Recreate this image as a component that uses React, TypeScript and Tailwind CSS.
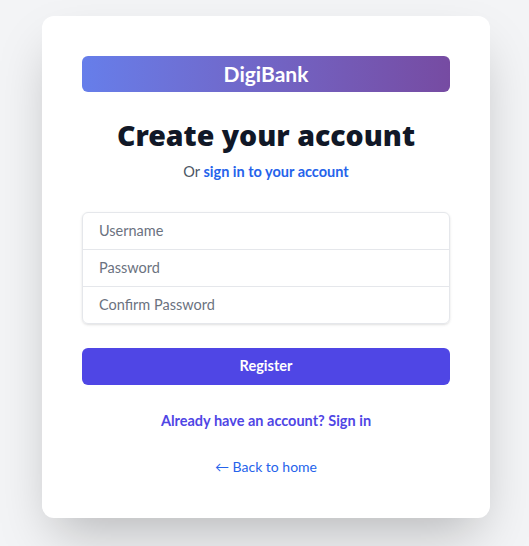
import React from 'react';

const App: React.FC = () => {
  return (
    <div className="min-h-screen bg-[#f3f4f6] flex justify-center pt-4 pl-[3px] font-['Lato',sans-serif]">
      <div className="w-[448px] h-[502px] bg-white rounded-xl shadow-2xl px-10 pt-10">
        <div className="h-9 rounded-md bg-gradient-to-r from-[#667eea] to-[#764ba2] flex items-center justify-center">
          <span className="text-white text-[21px] font-bold">DigiBank</span>
        </div>

        <h2 className="mt-[25px] text-center text-[28.5px] leading-9 font-black text-[#111827] font-['Noto_Sans',sans-serif]">Create your account</h2>
        <p className="mt-2 text-center text-[14.5px] text-[#4b5563]">
          Or <a href="#" className="font-bold text-[#2563eb]">sign in to your account</a>
        </p>

        <form className="mt-[29px]" onSubmit={e => e.preventDefault()}>
          <div className="rounded-md shadow-sm border border-[#e5e7eb] flex flex-col">
            <input type="text" placeholder="Username" className="h-9 px-4 text-[14.5px] outline-none placeholder-[#6b7280] rounded-t-md" />
            <input type="password" placeholder="Password" className="h-[37px] px-4 text-[14.5px] outline-none placeholder-[#6b7280] border-t border-[#e5e7eb]" />
            <input type="password" placeholder="Confirm Password" className="h-[37px] px-4 text-[14.5px] outline-none placeholder-[#6b7280] border-t border-[#e5e7eb] rounded-b-md" />
          </div>

          <button type="submit" className="mt-6 w-full h-[37px] rounded-md bg-[#4f46e5] text-white text-[14.5px] font-bold">
            Register
          </button>
        </form>

        <div className="mt-[23px] text-center">
          <a href="#" className="text-[14.5px] font-bold text-[#4f46e5]">Already have an account? Sign in</a>
        </div>
        <div className="mt-[22px] text-center">
          <a href="#" className="text-sm text-[#2563eb]">← Back to home</a>
        </div>
      </div>
    </div>
  );
};

export default App;
